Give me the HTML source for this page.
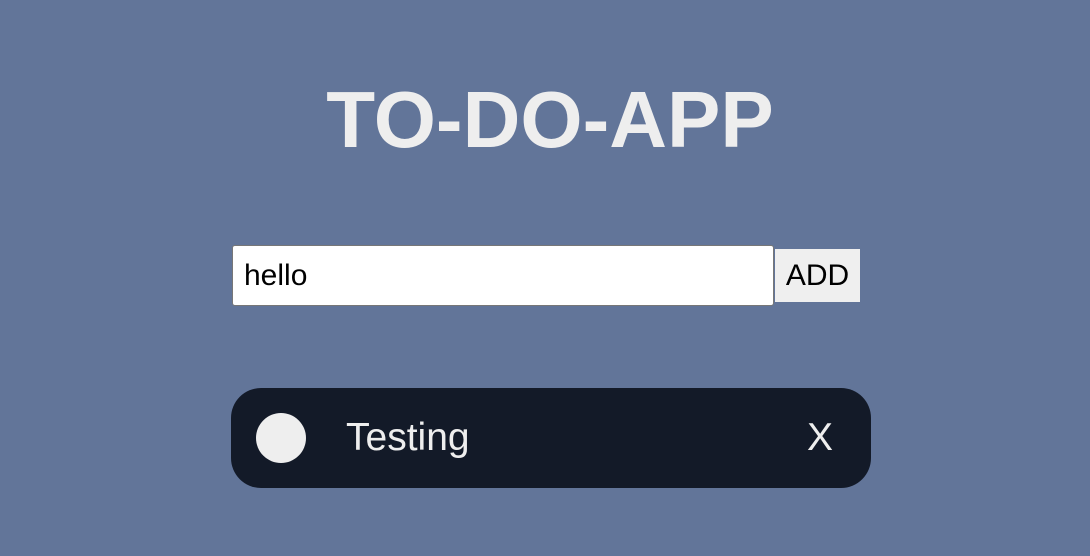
<!DOCTYPE html>
<html><head><style>
body{margin:0;width:1090px;height:556px;background:#627599;font-family:"Liberation Sans",Arial,sans-serif;position:relative;overflow:hidden}
h1{position:absolute;left:0;width:1100px;top:75px;margin:0;text-align:center;font-size:80px;font-weight:bold;color:#eeeeee;line-height:90px}
.inp{position:absolute;left:232px;top:245px;width:540px;height:59px;background:#fff;border:1px solid #777;border-radius:3px}
.inp span{position:absolute;left:11px;top:13px;font-size:30px;color:#000}
.btn{position:absolute;left:775px;top:249px;width:85px;height:53px;background:#efefef;font-size:30px;line-height:53px;text-align:center;color:#000}
.item{position:absolute;left:231px;top:388px;width:640px;height:100px;background:#131a28;border-radius:30px}
.dot{position:absolute;left:25px;top:25px;width:50px;height:50px;border-radius:50%;background:#eeeeee}
.t{position:absolute;left:115px;top:28px;font-size:39px;color:#eee}
.x{position:absolute;left:576px;top:28px;font-size:39px;color:#eee}
</style></head><body>
<h1>TO-DO-APP</h1>
<div class="inp"><span>hello</span></div>
<div class="btn">ADD</div>
<div class="item"><div class="dot"></div><div class="t">Testing</div><div class="x">X</div></div>
</body></html>
